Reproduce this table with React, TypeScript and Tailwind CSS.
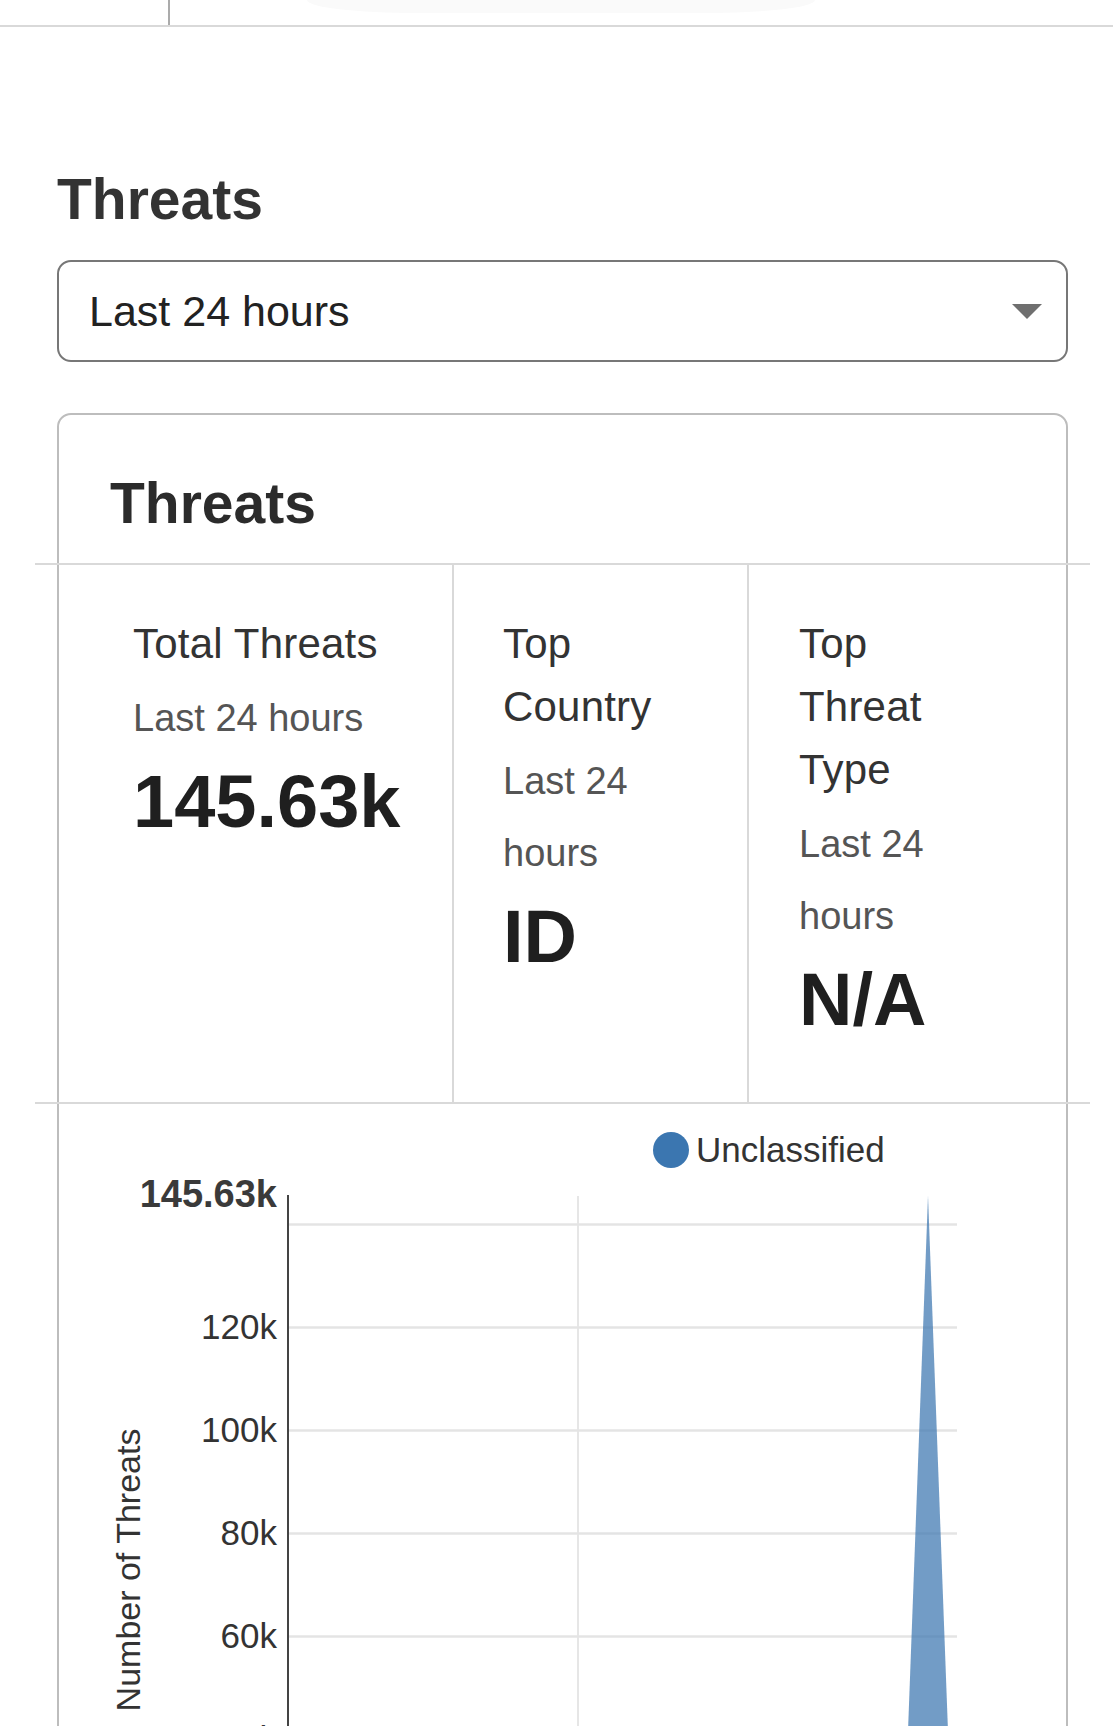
import React from "react";

const ticks = [
  { v: "120k", y: 223.5 },
  { v: "100k", y: 326.5 },
  { v: "80k", y: 429.5 },
  { v: "60k", y: 532.5 },
  { v: "40k", y: 635.5 },
  { v: "20k", y: 738.5 },
];

function Stat({
  title,
  sub,
  value,
  className,
}: {
  title: string;
  sub: string;
  value: string;
  className: string;
}) {
  return (
    <div className={className}>
      <div className="text-[42px] leading-[63px] text-[#333] tracking-[0.2px]">{title}</div>
      <div className="mt-[7px] text-[38px] leading-[72px] text-[#555]">{sub}</div>
      <div className="mt-[3px] text-[74px] leading-[89px] font-bold text-[#1f1f1f]">{value}</div>
    </div>
  );
}

function Chart() {
  return (
    <svg className="block w-full h-[900px]" viewBox="0 0 1007 900" xmlns="http://www.w3.org/2000/svg">
      {/* legend */}
      <circle cx="612" cy="46" r="18" fill="#3b76b0" />
      <text x="637" y="58" fontSize="35" fill="#333" fontFamily="'Liberation Sans', Arial, sans-serif">
        Unclassified
      </text>
      {/* grid */}
      <line x1="519" y1="92" x2="519" y2="842" stroke="#e6e6e6" strokeWidth="2" />
      <line x1="229" y1="120.5" x2="898" y2="120.5" stroke="#e4e4e4" strokeWidth="2.5" />
      {ticks.map((t) => (
        <line key={t.v} x1="229" y1={t.y} x2="898" y2={t.y} stroke="#e4e4e4" strokeWidth="2.5" />
      ))}
      <line x1="229" y1="841.5" x2="898" y2="841.5" stroke="#e4e4e4" strokeWidth="2.5" />
      {/* area */}
      <polygon points="841,841.5 869,91.5 897,841.5" fill="#3b76b0" fillOpacity="0.72" />
      {/* axis */}
      <line x1="229" y1="91" x2="229" y2="842" stroke="#444" strokeWidth="2" />
      <text
        x="218"
        y="103"
        textAnchor="end"
        fontSize="38"
        fontWeight="bold"
        fill="#3a3a3a"
        fontFamily="'Liberation Sans', Arial, sans-serif"
      >
        145.63k
      </text>
      {ticks.map((t) => (
        <text
          key={t.v + "l"}
          x="218"
          y={t.y + 11}
          textAnchor="end"
          fontSize="35"
          fill="#333"
          fontFamily="'Liberation Sans', Arial, sans-serif"
        >
          {t.v}
        </text>
      ))}
      <text
        transform="translate(81 466) rotate(-90)"
        textAnchor="middle"
        fontSize="34"
        fill="#333"
        fontFamily="'Liberation Sans', Arial, sans-serif"
      >
        Number of Threats
      </text>
    </svg>
  );
}

export default function App() {
  return (
    <div className="min-h-[1726px] bg-white font-['Liberation_Sans',Arial,sans-serif] overflow-hidden">
      {/* top bar */}
      <div className="flex h-[27px] border-b-2 border-[#d9d9d9]">
        <div className="w-[170px] border-r-2 border-[#ababab]" />
        <div className="flex-1">
          <div className="ml-[137px] w-[508px] h-[13px] bg-[#fafafa] rounded-bl-[110px_13px] rounded-br-[110px_13px]" />
        </div>
      </div>

      <div className="pl-[57px] pr-[45px]">
        <h1 className="mt-[138px] text-[57px] leading-[68px] font-bold text-[#333]">Threats</h1>

        <div className="mt-[27px] flex h-[102px] items-center justify-between rounded-[14px] border-[2.5px] border-[#777] pl-[30px] pr-[24px]">
          <span className="text-[43px] text-[#222]">Last 24 hours</span>
          <span className="block h-0 w-0 border-l-[15px] border-r-[15px] border-t-[15px] border-l-transparent border-r-transparent border-t-[#6f6f6f]" />
        </div>

        <div className="mt-[51px] rounded-[14px] border-2 border-[#bdbdbd]">
          <h2 className="pt-[54px] pb-[26px] pl-[51px] text-[57px] leading-[68px] font-bold text-[#2b2b2b]">Threats</h2>
          <div className="-mx-[24px] h-[2px] bg-[#d9d9d9]" />
          <div className="flex">
            <Stat
              className="w-[393px] shrink-0 pl-[74px] pr-[20px] pt-[47px] pb-[58px]"
              title="Total Threats"
              sub="Last 24 hours"
              value="145.63k"
            />
            <Stat
              className="w-[295px] shrink-0 border-l-2 border-[#d9d9d9] pl-[49px] pr-[50px] pt-[47px] pb-[58px]"
              title="Top Country"
              sub="Last 24 hours"
              value="ID"
            />
            <Stat
              className="flex-1 border-l-2 border-[#d9d9d9] pl-[50px] pr-[70px] pt-[47px] pb-[58px]"
              title="Top Threat Type"
              sub="Last 24 hours"
              value="N/A"
            />
          </div>
          <div className="-mx-[24px] h-[2px] bg-[#d9d9d9]" />
          <Chart />
        </div>
      </div>
    </div>
  );
}
